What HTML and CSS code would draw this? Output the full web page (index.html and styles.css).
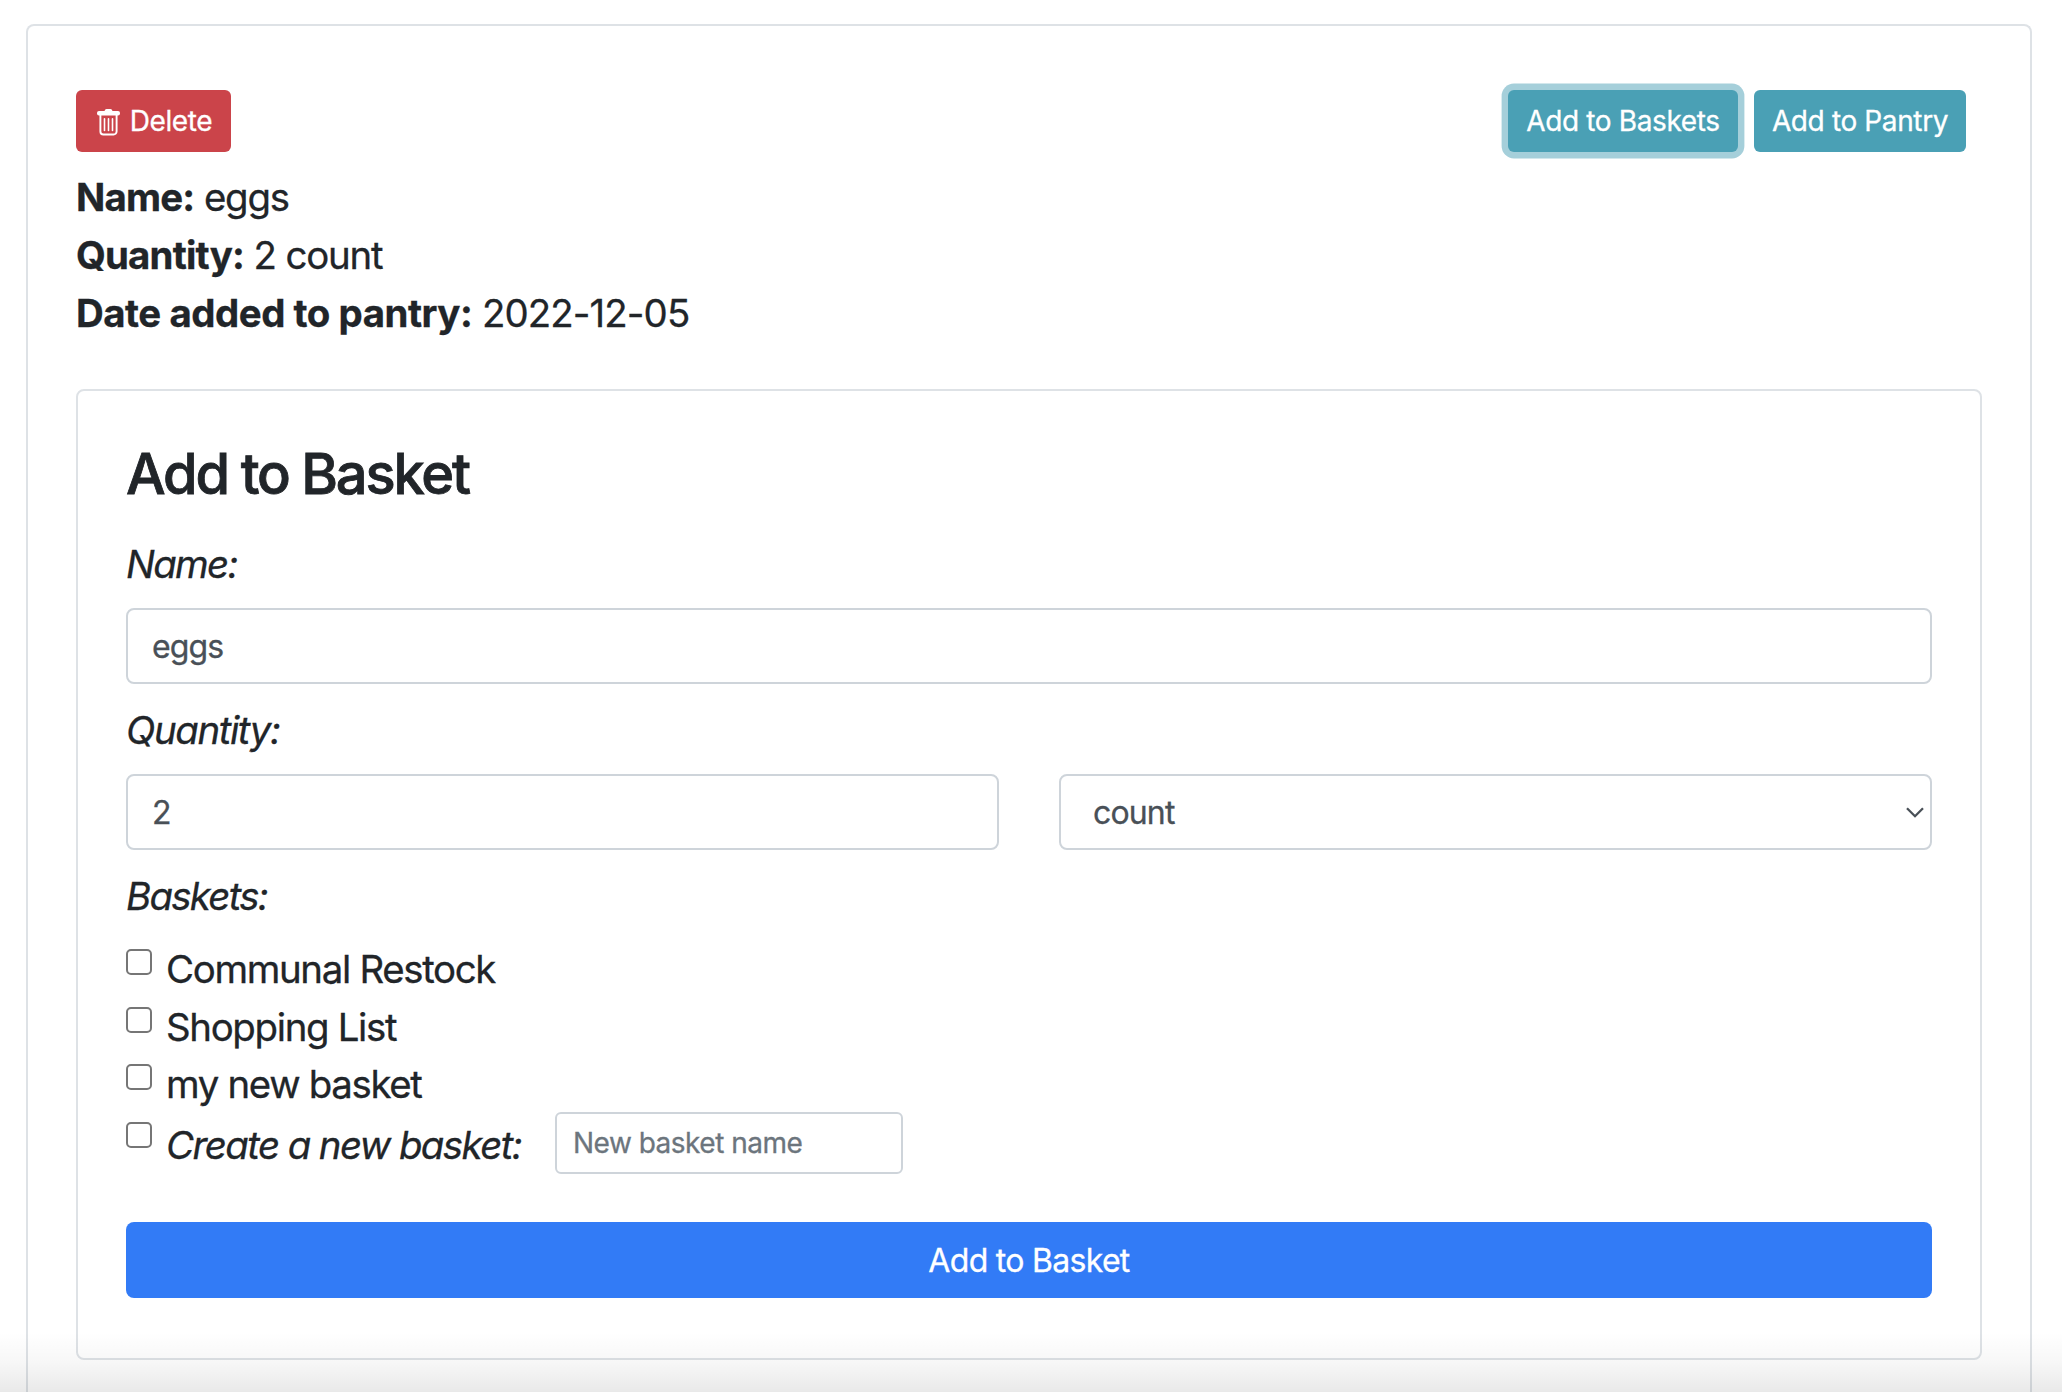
FILE: index.html
```html
<!DOCTYPE html>
<html lang="en">
<head>
<meta charset="utf-8">
<title>Pantry item</title>
<link rel="stylesheet" href="styles.css">
</head>
<body>
<main class="card item-card">
  <div class="toolbar">
    <button class="btn btn-danger" type="button">
      <svg class="trash" viewBox="0 0 23 27" width="23" height="27" fill="none" stroke="#fff">
        <path fill="#fff" stroke="none" d="M2 2h5.500q.5-2 2-2h4q1.500 0 2 2H21a2 2 0 0 1 2 2v.5a2 2 0 0 1-2 2H2a2 2 0 0 1-2-2V4a2 2 0 0 1 2-2z"/>
        <path stroke-width="1.900" d="M3.400 6v16.500a3 3 0 0 0 3 3h10.200a3 3 0 0 0 3-3V6"/>
        <path stroke-width="1.600" stroke-linecap="round" d="M7.500 9.800v11.700M11.500 9.800v11.700M15.500 9.800v11.700"/>
      </svg>
      <span>Delete</span>
    </button>
    <div class="actions">
      <button class="btn btn-info is-focused" type="button">Add to Baskets</button>
      <button class="btn btn-info btn-pantry" type="button">Add to Pantry</button>
    </div>
  </div>
  <div class="details">
    <div><b>Name:</b> eggs</div>
    <div><b>Quantity:</b> 2 count</div>
    <div><b class="date-label">Date added to pantry:</b> <span class="date">2022-12-05</span></div>
  </div>
  <form class="card basket-card">
    <h3 class="title">Add to Basket</h3>
    <label class="field-label" for="name">Name:</label>
    <input class="control" id="name" type="text" value="eggs">
    <label class="field-label label-quantity" for="quantity">Quantity:</label>
    <div class="quantity-row">
      <input class="control" id="quantity" type="text" value="2">
      <div class="select-wrap">
        <select class="control select"><option>count</option></select>
        <svg class="chevron" viewBox="0 0 18 11" width="18" height="11" fill="none" stroke="#495057" stroke-width="2.300"><path d="M1 1.200 9 9.200 17 1.200"/></svg>
      </div>
    </div>
    <div class="field-label">Baskets:</div>
    <div class="options">
      <label class="option"><input class="check" type="checkbox"><span>Communal Restock</span></label>
      <label class="option"><input class="check" type="checkbox"><span>Shopping List</span></label>
      <label class="option"><input class="check" type="checkbox"><span>my new basket</span></label>
      <div class="option option-new">
        <input class="check" id="create" type="checkbox">
        <label class="create" for="create">Create a new basket:</label>
        <input class="control control-sm" type="text" placeholder="New basket name">
      </div>
    </div>
    <button class="submit" type="button">Add to Basket</button>
  </form>
</main>
<div class="bottom-shade"></div>
</body>
</html>
```
FILE: styles.css
```css
* { box-sizing: border-box; }
body {
  margin: 0;
  height: 1392px;
  overflow: hidden;
  position: relative;
  padding: 24px 30px 0 26px;
  background: #fff;
  color: #212529;
  font-family: Inter, "Liberation Sans", sans-serif;
  font-size: 38.4px;
  font-weight: 400;
  line-height: 57.6px;
  letter-spacing: -1.2px;
  -webkit-text-stroke-width: 0.3px;
}
button, input, select { font-family: inherit; font-weight: inherit; margin: 0; -webkit-text-stroke-width: 0.3px; }
.card { border: 2px solid #dee2e6; border-radius: 8px; }
.item-card { height: 1368px; padding: 64px 48px 0; border-bottom: 0; border-radius: 8px 8px 0 0; }
.toolbar { display: flex; justify-content: space-between; padding-right: 16px; }
.actions { display: flex; gap: 16px; }
.btn {
  display: flex;
  align-items: center;
  justify-content: center;
  height: 62px;
  padding: 0;
  border: 0;
  border-radius: 6px;
  color: #fff;
  font-size: 28px;
  line-height: 42px;
  letter-spacing: -0.37px;
}
.btn-danger { width: 155px; gap: 10px; padding-left: 2px; background: #cb444a; }
.btn-info { width: 230px; background: #4aa0b5; }
.btn-pantry { width: 212px; }
.is-focused { box-shadow: 0 0 0 6.4px #a5cfda; }
.trash { margin-top: 2px; }
.details { margin-top: 16px; }
.details div { height: 58px; line-height: 58px; }
.details b { letter-spacing: -0.8px; }
.details .date-label { letter-spacing: -0.45px; }
.details .date { letter-spacing: -0.9px; }
.basket-card { height: 971px; margin-top: 47px; padding: 48px; }
.title {
  margin: 0 0 28px;
  padding-top: 3px;
  font-size: 56px;
  line-height: 64px;
  font-weight: 500;
  letter-spacing: -2.2px;
  -webkit-text-stroke-width: 0.8px;
}
.field-label {
  display: block;
  height: 58px;
  margin: 16px 0;
  padding-top: 2px;
  line-height: 56px;
  font-style: italic;
  letter-spacing: -1.7px;
}
.label-quantity { letter-spacing: -1.4px; }
.control {
  display: block;
  width: 100%;
  height: 76px;
  padding: 1px 24px 0;
  border: 2px solid #ced4da;
  border-radius: 8px;
  background: #fff;
  color: #495057;
  font-size: 32px;
  letter-spacing: -0.85px;
}
.quantity-row { display: grid; grid-template-columns: 1fr 1fr; gap: 60px; }
.select-wrap { position: relative; }
.select { appearance: none; padding-left: 32px; }
.chevron { position: absolute; right: 8px; top: 33px; }
.option { display: flex; height: 57.6px; letter-spacing: -1.33px; }
.option span { padding-top: 1px; }
.check {
  appearance: none;
  flex: none;
  width: 26px;
  height: 26px;
  margin: 9px 14px 0 0;
  border: 2px solid #767676;
  border-radius: 5px;
  background: #fff;
}
.option-new { height: 61.2px; }
.create { width: 389px; padding-top: 4px; font-style: italic; letter-spacing: -1.57px; }
.control-sm { width: 348px; height: 62px; margin-top: -0.8px; padding: 0 16px; border-radius: 6px; font-size: 28px; letter-spacing: -0.5px; }
.control-sm::placeholder { color: #6c757d; opacity: 1; }
.submit {
  display: block;
  width: 100%;
  height: 76px;
  margin-top: 48px;
  padding: 1px 0 0;
  border: 0;
  border-radius: 8px;
  background: #327bf6;
  color: #fff;
  font-size: 32px;
  letter-spacing: -0.7px;
}
.bottom-shade {
  position: absolute;
  inset: auto 0 0;
  height: 60px;
  background: linear-gradient(rgba(0, 0, 0, 0), rgba(0, 0, 0, 0.03) 50%, rgba(0, 0, 0, 0.085));
}
```
